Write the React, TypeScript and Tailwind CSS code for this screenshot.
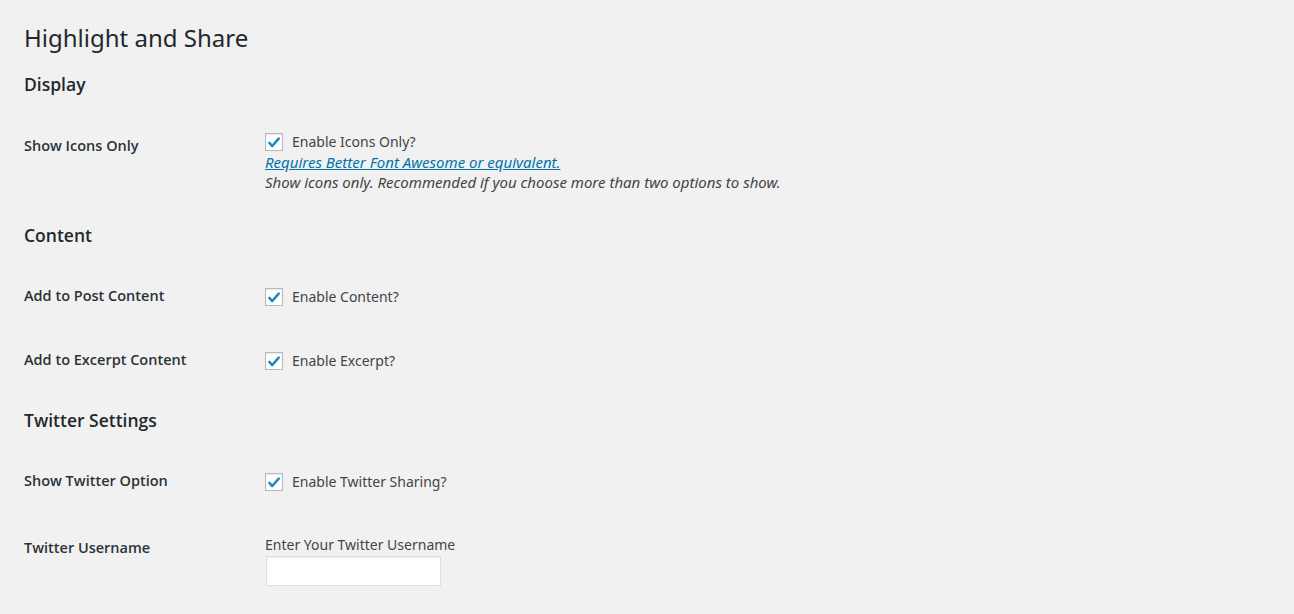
import React from "react";

type RowProps = {
  label: string;
  top: string;
  labelOffset: string;
  children: React.ReactNode;
};

const Row = ({ label, top, labelOffset, children }: RowProps) => (
  <div className={`grid grid-cols-[241px_1fr] ${top}`}>
    <div
      className={`text-[14.5px] leading-[18px] font-semibold text-[#2c3338] ${labelOffset}`}
      style={{ fontFamily: '"Open Sans", "Noto Sans", sans-serif' }}
    >
      {label}
    </div>
    <div className="text-[14px] leading-[20px] text-[#444]">{children}</div>
  </div>
);

const Check = ({ text }: { text: string }) => (
  <label className="flex items-center gap-[9px] h-[20px]">
    <span className="w-[18px] h-[18px] border border-[#b4b9be] bg-white flex items-center justify-center shadow-[inset_0_1px_2px_rgba(0,0,0,0.1)]">
      <svg viewBox="0 0 20 20" className="w-[17px] h-[17px]">
        <path
          d="M4.2 10.6l3.6 3.8L15.9 5.2"
          fill="none"
          stroke="#1e8cbe"
          strokeWidth="3.2"
          strokeLinecap="round"
          strokeLinejoin="round"
        />
      </svg>
    </span>
    <span>{text}</span>
  </label>
);

const SectionTitle = ({ children, top }: { children: string; top: string }) => (
  <h2
    className={`text-[17.5px] leading-[24px] font-semibold text-[#23282d] ${top}`}
    style={{ fontFamily: '"Open Sans", "Noto Sans", sans-serif' }}
  >
    {children}
  </h2>
);

export default function App() {
  return (
    <div
      className="min-h-screen bg-[#f1f1f1] px-[24px] pt-[23px]"
      style={{ fontFamily: '"Noto Sans", "Open Sans", sans-serif' }}
    >
      <h1 className="text-[24px] leading-[29px] font-normal text-[#23282d]">
        Highlight and Share
      </h1>

      <SectionTitle top="mt-[20px]">Display</SectionTitle>
      <Row label="Show Icons Only" top="mt-[36px]" labelOffset="mt-[5px]">
        <Check text="Enable Icons Only?" />
        <a href="#" className="block italic underline text-[15px] text-[#0073aa]">
          Requires Better Font Awesome or equivalent.
        </a>
        <p className="italic text-[15px]">
          Show icons only. Recommended if you choose more than two options to show.
        </p>
      </Row>

      <SectionTitle top="mt-[31px]">Content</SectionTitle>
      <Row label="Add to Post Content" top="mt-[40px]" labelOffset="mt-0">
        <Check text="Enable Content?" />
      </Row>
      <Row label="Add to Excerpt Content" top="mt-[44px]" labelOffset="mt-0">
        <Check text="Enable Excerpt?" />
      </Row>

      <SectionTitle top="mt-[37px]">Twitter Settings</SectionTitle>
      <Row label="Show Twitter Option" top="mt-[40px]" labelOffset="mt-0">
        <Check text="Enable Twitter Sharing?" />
      </Row>
      <Row label="Twitter Username" top="mt-[43px]" labelOffset="mt-[4px]">
        <div>Enter Your Twitter Username</div>
        <input
          type="text"
          className="block mt-[1px] ml-[1px] w-[175px] h-[30px] bg-white border border-[#ddd] shadow-[inset_0_1px_2px_rgba(0,0,0,0.07)] outline-none"
        />
      </Row>
    </div>
  );
}
